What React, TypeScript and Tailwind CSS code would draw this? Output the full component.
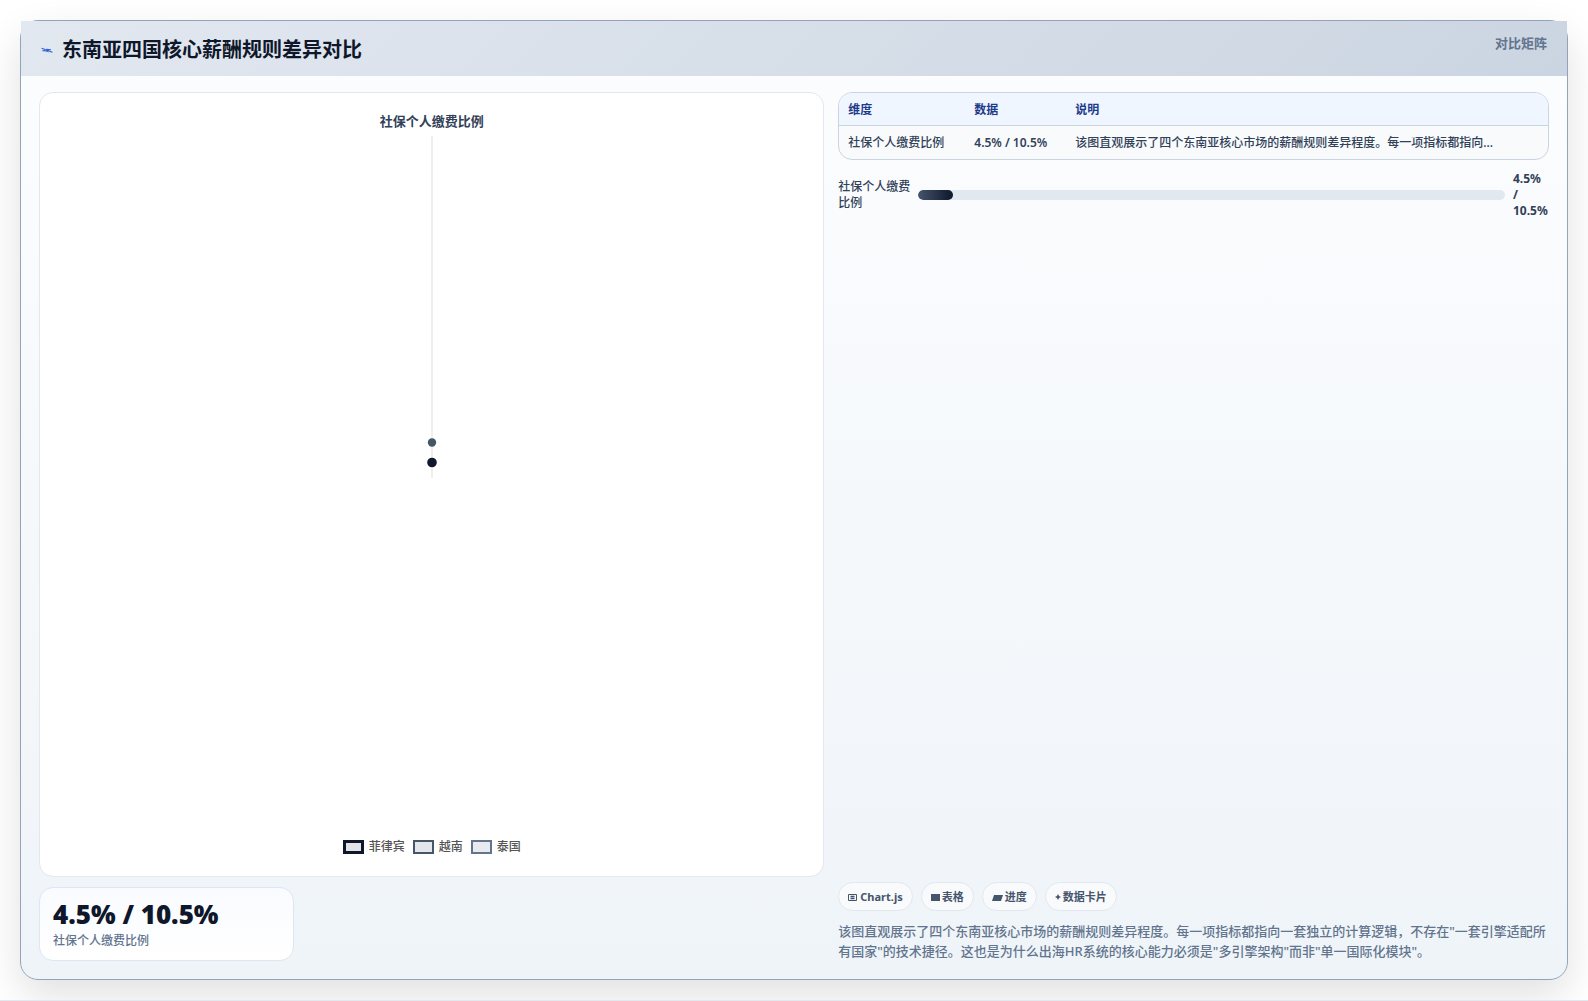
import React from 'react';

const SUMMARY =
  '该图直观展示了四个东南亚核心市场的薪酬规则差异程度。每一项指标都指向一套独立的计算逻辑，不存在"一套引擎适配所有国家"的技术捷径。这也是为什么出海HR系统的核心能力必须是"多引擎架构"而非"单一国际化模块"。';

const legend = [
  { name: '菲律宾', box: 'border-[3px] border-[#0f172a] bg-[#e2e3e8]' },
  { name: '越南', box: 'border-2 border-[#475569] bg-[#e3e6ea]' },
  { name: '泰国', box: 'border-2 border-[#64748b] bg-[#e7eaef]' },
];

function HeaderIcon() {
  return (
    <svg width="12" height="20" viewBox="0 0 12 20" fill="none" stroke="#3562d4" strokeWidth="1.1" aria-hidden="true">
      <path d="M0.5 8.3 L3.5 9.2 L6.5 11.2 L5.5 9.2 L8.5 11.3 L11.5 12.3" />
      <path d="M1.500 10.600 L6.500 11 M5.500 9.400 L10 9.800" />
    </svg>
  );
}

function ChartIcon() {
  return (
    <svg width="10" height="9" viewBox="0 0 10 9" fill="none" stroke="currentColor" aria-hidden="true">
      <path d="M0.5 1.5h8v6h-8z" />
      <path d="M2.500 3.500h4 M2.500 5.500h4" strokeWidth="1.300" />
    </svg>
  );
}

function TableIcon() {
  return (
    <svg width="9" height="9" viewBox="0 0 9 9" fill="currentColor" aria-hidden="true">
      <path d="M0 1h9v7H0z" />
    </svg>
  );
}

function ProgressIcon() {
  return (
    <svg width="11" height="9" viewBox="0 0 11 9" fill="currentColor" aria-hidden="true">
      <path d="M2 2h9l-2 6H0z" />
    </svg>
  );
}

function CardIcon() {
  return (
    <svg width="6" height="9" viewBox="0 0 6 9" fill="currentColor" aria-hidden="true">
      <path d="M3 1l1 2 2 1-2 1L3 7l-1-2-2-1 2-1z" />
    </svg>
  );
}

function Tag({ icon, children }: { icon: React.ReactNode; children: React.ReactNode }) {
  return (
    <li className="flex h-[29px] items-center gap-[2px] rounded-full border border-slate-200 bg-slate-50 px-[9px] pt-px text-[11px] font-bold text-slate-600">
      {icon}
      {children}
    </li>
  );
}

export default function App() {
  return (
    <div className="flex min-h-screen flex-col overflow-hidden border-b border-slate-200 bg-white p-5 font-['Noto_Sans','Noto_Sans_CJK_SC',sans-serif] text-slate-700">
      <main className="flex flex-1 flex-col rounded-[18px] border border-[#94a3b8] bg-linear-to-b from-[#fcfdff] to-[#eff4f8] shadow-[0_16px_40px_rgba(0,0,0,0.12)]">
        <header className="flex h-[55px] items-start justify-between bg-linear-[135deg] from-[#e2e8f0] to-[#cbd5e1] px-5 py-[13px]">
          <h1 className="flex items-center gap-[9px] text-xl leading-8 font-bold text-slate-900">
            <HeaderIcon />
            东南亚四国核心薪酬规则差异对比
          </h1>
          <span className="text-[13px] leading-[18px] font-semibold text-slate-500">对比矩阵</span>
        </header>

        <div className="grid flex-1 grid-cols-[1.105fr_1fr] gap-[14px] px-[18px] pt-4 pb-[18px]">
          <section className="flex min-w-0 flex-col gap-[10px]">
            <figure className="flex flex-1 flex-col items-center rounded-[14px] border border-slate-200 bg-white pt-[18px] pb-5">
              <figcaption className="text-[13px] leading-5 font-bold text-slate-700">社保个人缴费比例</figcaption>
              <svg className="mt-[5px]" width="20" height="342" viewBox="0 0 20 342" role="img" aria-label="社保个人缴费比例">
                <path d="M10 0v342" stroke="#efefef" strokeWidth="2" />
                <circle cx="10" cy="306.5" r="4.200" fill="#475569" />
                <circle cx="10" cy="326.5" r="4.800" fill="#0f172a" />
              </svg>
              <ul className="mt-auto flex gap-2 text-xs leading-[18px] font-medium text-[#555]">
                {legend.map((item) => (
                  <li key={item.name} className="flex items-center gap-[5px]">
                    <span className={`h-[14px] w-[21px] ${item.box}`} />
                    {item.name}
                  </li>
                ))}
              </ul>
            </figure>
            <div className="grid grid-cols-3 gap-[10px]">
              <div className="rounded-[14px] border border-[#dbe7f5] bg-linear-to-b from-[#f9fbff] to-white px-[13px] pt-[10px] pb-[9px]">
                <div className="text-[26px] leading-8 font-black text-slate-900">4.5% / 10.5%</div>
                <div className="pt-px text-xs leading-5 font-medium text-slate-500">社保个人缴费比例</div>
              </div>
            </div>
          </section>

          <section className="flex min-w-0 flex-col">
            <div className="overflow-hidden rounded-[14px] border border-[#cbd5e1] bg-slate-50">
              <table className="w-full table-fixed border-collapse text-left text-xs leading-4 font-medium">
                <colgroup>
                  <col className="w-[126px]" />
                  <col className="w-[101px]" />
                  <col />
                </colgroup>
                <thead>
                  <tr className="border-b border-[#cbd5e1] bg-[#eff6ff] text-[#1e3a8a]">
                    <th className="px-[9px] pt-[9px] pb-[7px] font-bold">维度</th>
                    <th className="px-[9px] pt-[9px] pb-[7px] font-bold">数据</th>
                    <th className="px-[9px] pt-[9px] pb-[7px] font-bold">说明</th>
                  </tr>
                </thead>
                <tbody>
                  <tr>
                    <td className="px-[9px] pt-[9px] pb-2">社保个人缴费比例</td>
                    <td className="px-[9px] pt-[9px] pb-2 font-semibold">4.5% / 10.5%</td>
                    <td className="px-[9px] pt-[9px] pb-2">该图直观展示了四个东南亚核心市场的薪酬规则差异程度。每一项指标都指向...</td>
                  </tr>
                </tbody>
              </table>
            </div>

            <div className="mt-[11px] grid grid-cols-[72px_1fr_36px] items-center gap-2 text-xs leading-4">
              <span className="font-medium">社保个人缴费比例</span>
              <div className="h-[10px] overflow-hidden rounded-full bg-slate-200">
                <div className="h-full w-[6%] rounded-full bg-linear-to-r from-slate-600 to-slate-900" />
              </div>
              <span className="font-bold">4.5% / 10.5%</span>
            </div>

            <ul className="mt-auto flex flex-wrap gap-2">
              <Tag icon={<ChartIcon />}>Chart.js</Tag>
              <Tag icon={<TableIcon />}>表格</Tag>
              <Tag icon={<ProgressIcon />}>进度</Tag>
              <Tag icon={<CardIcon />}>数据卡片</Tag>
            </ul>
            <p className="mt-[10px] text-[13px] leading-5 font-medium text-slate-500">{SUMMARY}</p>
          </section>
        </div>
      </main>
    </div>
  );
}
